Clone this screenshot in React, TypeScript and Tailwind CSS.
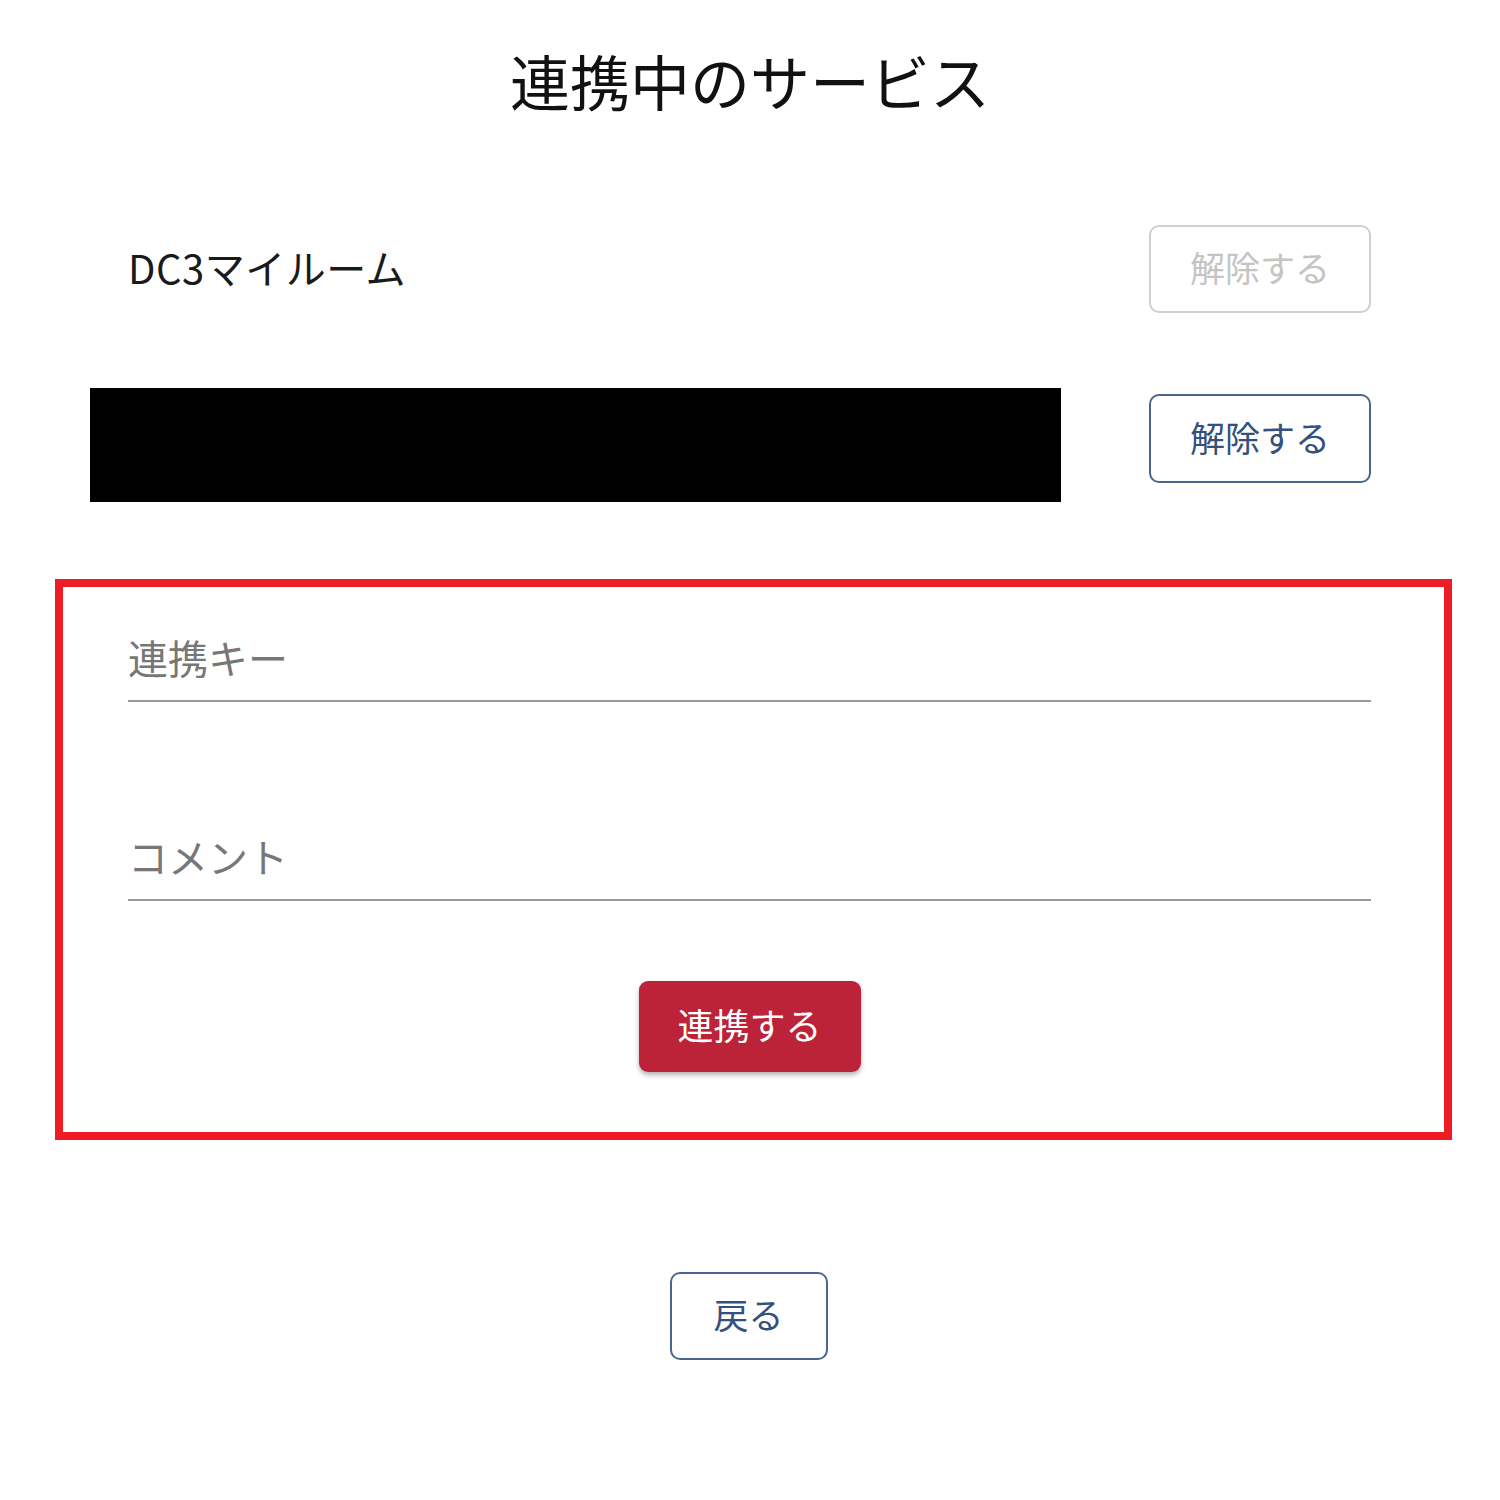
import React from "react";

const font = { fontFamily: '"Noto Sans CJK JP", "Noto Sans", sans-serif' };

function OutlineButton({ label, disabled }: { label: string; disabled?: boolean }) {
  return (
    <button
      className={
        disabled
          ? "w-[222px] h-[88px] pb-[5px] rounded-[10px] border-2 border-[#cfcfcf] bg-white text-[35px] text-[#c4c4c4] leading-none"
          : "w-[222px] h-[89px] pb-[5px] rounded-[10px] border-2 border-[#4a6591] bg-white text-[35px] text-[#34507e] leading-none"
      }
    >
      {label}
    </button>
  );
}

export default function App() {
  return (
    <div className="w-[1500px] h-[1500px] bg-white text-[#111]" style={font}>
      {/* Title */}
      <h1 className="pt-[50px] text-center text-[60px] leading-[60px] font-normal">
        連携中のサービス
      </h1>

      {/* Service rows */}
      <div className="mt-[115px] flex items-center justify-between pl-[128px] pr-[129px]">
        <span className="pb-[4px] text-[40px] leading-none tracking-[0.5px] text-[#1a1a1a]">DC3マイルーム</span>
        <OutlineButton label="解除する" disabled />
      </div>

      <div className="mt-[75px] flex items-start justify-between pl-[90px] pr-[129px]">
        <div className="w-[971px] h-[114px] bg-black" />
        <div className="mt-[6px]">
          <OutlineButton label="解除する" />
        </div>
      </div>

      {/* Link form */}
      <div className="mt-[77px] ml-[55px] w-[1397px] border-[8px] border-[#ee1c25] pl-[65px] pr-[73px] pt-[50px] pb-[60px]">
        <div className="border-b-2 border-[#9a9a9a] pb-[23px]">
          <span className="block text-[40px] leading-[40px] text-[#777]">連携キー</span>
        </div>
        <div className="mt-[134px] border-b-2 border-[#9a9a9a] pb-[23px]">
          <span className="block text-[40px] leading-[40px] text-[#777]">コメント</span>
        </div>
        <div className="mt-[80px] flex justify-center">
          <button className="w-[222px] h-[91px] pb-[6px] rounded-[9px] bg-[#bc2339] text-white text-[36px] leading-none shadow-[0_3px_5px_rgba(0,0,0,0.3)]">
            連携する
          </button>
        </div>
      </div>

      {/* Back */}
      <div className="mt-[132px] flex justify-center pr-[3px]">
        <button className="w-[158px] h-[88px] pb-[5px] rounded-[10px] border-2 border-[#4a6591] bg-white text-[35px] text-[#34507e] leading-none">
          戻る
        </button>
      </div>
    </div>
  );
}
